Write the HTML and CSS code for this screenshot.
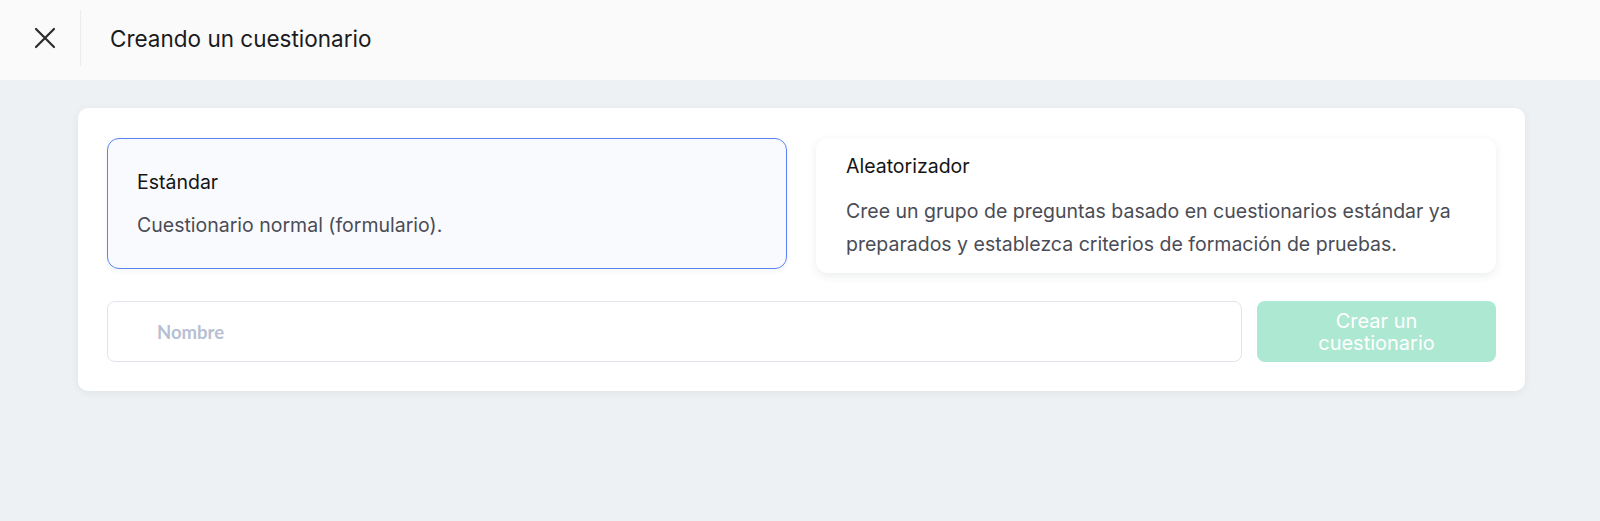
FILE: index.html
```html
<!DOCTYPE html>
<html lang="es">
<head>
<meta charset="utf-8">
<title>Creando un cuestionario</title>
<link rel="stylesheet" href="styles.css">
</head>
<body>
<header class="topbar">
  <button class="close-btn" aria-label="Cerrar">
    <svg width="22" height="22" viewBox="0 0 22 22" fill="none" stroke="#2b2b2b" stroke-width="2.2" stroke-linecap="round">
      <path d="M2 2 L20 20 M20 2 L2 20"/>
    </svg>
  </button>
  <span class="divider"></span>
  <h1 class="page-title">Creando un cuestionario</h1>
</header>
<main class="main">
  <section class="panel">
    <div class="types">
      <div class="type-card selected">
        <div class="type-title">Estándar</div>
        <div class="type-desc">Cuestionario normal (formulario).</div>
      </div>
      <div class="type-card">
        <div class="type-title">Aleatorizador</div>
        <div class="type-desc">Cree un grupo de preguntas basado en cuestionarios estándar ya preparados y establezca criterios de formación de pruebas.</div>
      </div>
    </div>
    <div class="create-row">
      <input class="name-input" type="text" placeholder="Nombre">
      <button class="create-btn">Crear un<br>cuestionario</button>
    </div>
  </section>
</main>
</body>
</html>
```

FILE: styles.css
```css
* { box-sizing: border-box; }
html, body { margin: 0; padding: 0; }
body {
  background: #eef1f3;
  font-family: Inter, "Noto Sans", sans-serif;
  color: #141414;
  height: 521px;
}
.topbar {
  height: 80px;
  background: #fafafa;
  display: flex;
  align-items: center;
  padding: 0 0 4px 34px;
}
.close-btn {
  width: 22px;
  height: 22px;
  padding: 0;
  border: 0;
  background: none;
  display: flex;
  margin-right: 24px;
}
.divider {
  width: 1px;
  height: 56px;
  background: #ececec;
}
.page-title {
  margin: 0 0 0 29px;
  font-size: 22.5px;
  font-weight: 400;
  color: #1b1b1d;
}
.main {
  padding: 28px 75px 0 78px;
}
.panel {
  background: #fff;
  border-radius: 10px;
  padding: 30px 29px 29px 29px;
  box-shadow: 0 2px 8px rgba(30, 40, 60, 0.06);
}
.types {
  display: flex;
  gap: 29px;
  align-items: flex-start;
}
.type-card {
  flex: 1;
  background: #fff;
  border-radius: 12px;
  padding: 12px 30px;
  display: flex;
  flex-direction: column;
  justify-content: center;
  box-shadow: 0 3px 10px rgba(40, 50, 80, 0.09);
}
.type-card.selected {
  background: #f9fafe;
  border: 1px solid #5a82f4;
  box-shadow: 0 2px 6px rgba(40, 50, 80, 0.05);
  height: 131px;
  padding: 0 29px;
}
.type-title {
  font-size: 19.5px;
  line-height: 32px;
  color: #141414;
}
.type-desc {
  margin-top: 13px;
  font-size: 19.5px;
  line-height: 33px;
  color: #4a4c55;
}
.selected .type-desc { margin-top: 11px; }
.create-row {
  display: flex;
  gap: 15px;
  margin-top: 28px;
}
.name-input {
  flex: 1;
  height: 61px;
  border: 1px solid #e3e3ee;
  border-radius: 8px;
  padding: 0 0 0 49px;
  font-family: Lato, "Noto Sans", sans-serif;
  font-size: 18.5px;
  font-weight: 700;
  color: #333;
  outline: none;
  background: #fff;
}
.name-input::placeholder {
  color: #b7c0d2;
}
.create-btn {
  width: 239px;
  height: 61px;
  border: 0;
  border-radius: 8px;
  background: #ade8d2;
  color: #fff;
  font-family: Inter, "Noto Sans", sans-serif;
  font-size: 20px;
  line-height: 22px;
  padding: 0;
  text-align: center;
}
```
